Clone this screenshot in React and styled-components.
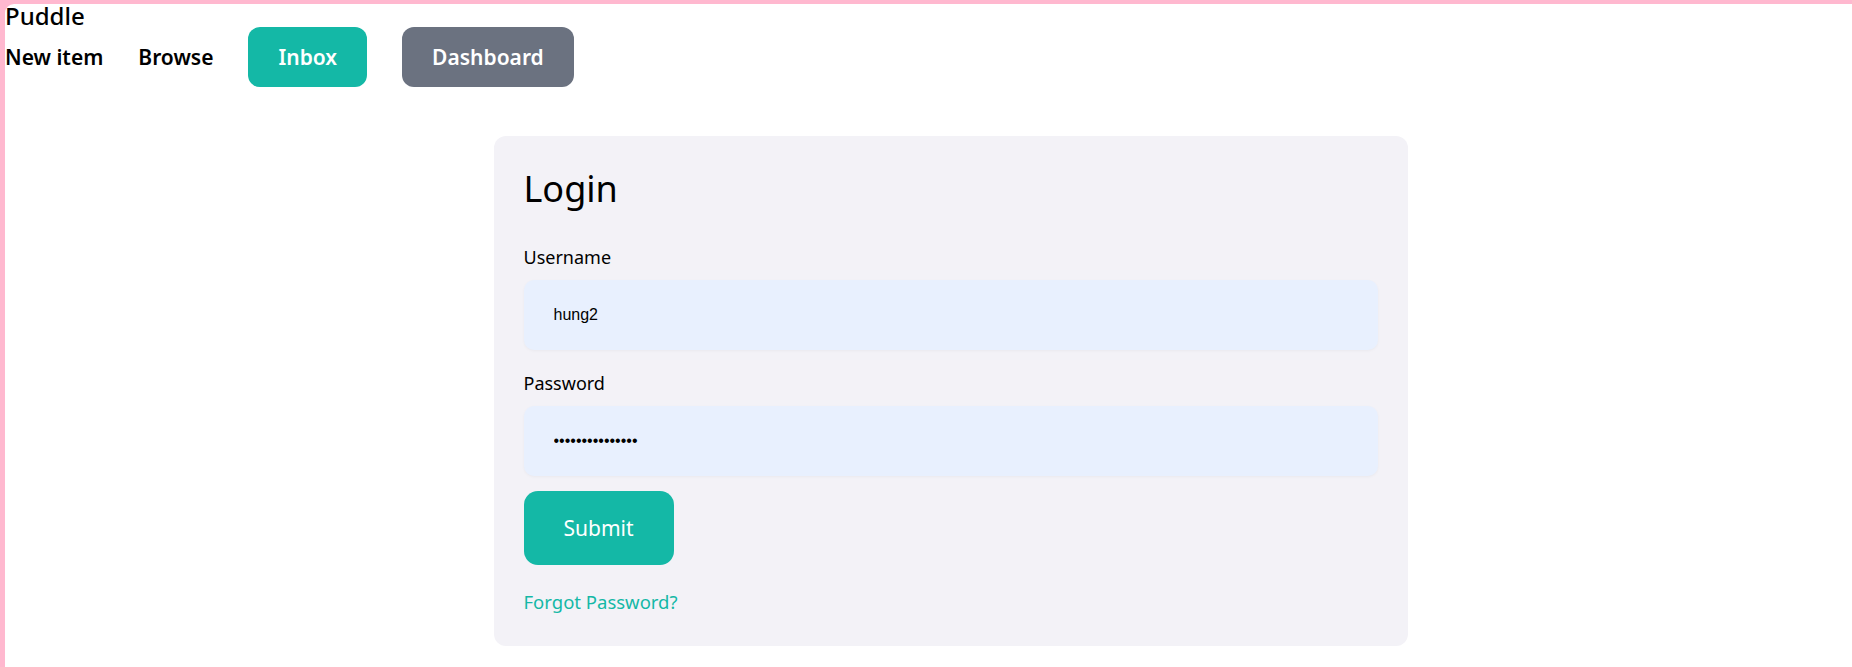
import React from 'react'
import styled, { createGlobalStyle } from 'styled-components'

const GlobalStyle = createGlobalStyle`
    * {
        box-sizing: border-box;
    }

    body {
        margin: 0;
        background: #ffb8cf;
        font-family: "Noto Sans", "Open Sans", sans-serif;
        color: #000;
    }
`

const Shell = styled.div`
    padding: 4px 0 0 5px;
    min-height: 100vh;
`

const Page = styled.div`
    background: #fff;
    border-top-left-radius: 9px;
    min-height: calc(100vh - 4px);
    padding-bottom: 40px;
`

const Brand = styled.div`
    font-size: 24px;
    line-height: 23px;
    font-weight: 500;
`

const Nav = styled.nav`
    display: flex;
    align-items: center;
    gap: 35px;
`

const NavLink = styled.a`
    font-size: 21px;
    font-weight: 600;
    color: #000;
    text-decoration: none;
    cursor: pointer;
`

const NavButton = styled.button`
    height: 60px;
    padding: 0 30px;
    border: none;
    border-radius: 12px;
    background: ${props => props.$tone === 'gray' ? '#6b7280' : '#14b8a6'};
    color: #fff;
    font-family: inherit;
    font-size: 21px;
    font-weight: 600;
    cursor: pointer;
`

const Main = styled.main`
    display: flex;
    justify-content: center;
    padding-left: 44px;
    margin-top: 49px;
`

const Card = styled.form`
    width: 914px;
    padding: 30px 30px 32px;
    background: #f3f2f7;
    border-radius: 12px;
    display: flex;
    flex-direction: column;
    align-items: flex-start;
`

const Heading = styled.h1`
    margin: 0 0 33px;
    font-size: 36px;
    line-height: 46px;
    font-weight: 400;
`

const Label = styled.label`
    font-size: 18px;
    line-height: 24px;
    margin-bottom: 11px;
`

const Input = styled.input`
    width: 100%;
    height: 70px;
    padding: 0 30px;
    margin-bottom: ${props => props.$last ? '15px' : '21px'};
    border: none;
    border-radius: 10px;
    background: #e8f0fe;
    box-shadow: 0 1px 3px rgba(0, 0, 0, 0.04);
    font-family: "Liberation Sans", Arial, sans-serif;
    font-size: 16px;
    color: #000;
    outline: none;
`

const Submit = styled.button`
    width: 150px;
    height: 74px;
    border: none;
    border-radius: 14px;
    background: #14b8a6;
    color: #fff;
    font-family: inherit;
    font-size: 21px;
    cursor: pointer;
    margin-bottom: 25px;
`

const Forgot = styled.a`
    font-size: 18.5px;
    line-height: 24px;
    color: #14b8a6;
    text-decoration: none;
    cursor: pointer;
`

const App = () => {
  return (
    <>
        <GlobalStyle/>
        <Shell>
            <Page>
                <Brand>Puddle</Brand>

                <Nav>
                    <NavLink>New item</NavLink>
                    <NavLink>Browse</NavLink>
                    <NavButton type="button">Inbox</NavButton>
                    <NavButton type="button" $tone="gray">Dashboard</NavButton>
                </Nav>

                <Main>
                    <Card onSubmit={e => e.preventDefault()}>
                        <Heading>Login</Heading>

                        <Label htmlFor="username">Username</Label>
                        <Input id="username" type="text" defaultValue="hung2"/>

                        <Label htmlFor="password">Password</Label>
                        <Input id="password" type="password" defaultValue="hung2password12" $last/>

                        <Submit type="submit">Submit</Submit>

                        <Forgot>Forgot Password?</Forgot>
                    </Card>
                </Main>
            </Page>
        </Shell>
    </>
  )
}

export default App
